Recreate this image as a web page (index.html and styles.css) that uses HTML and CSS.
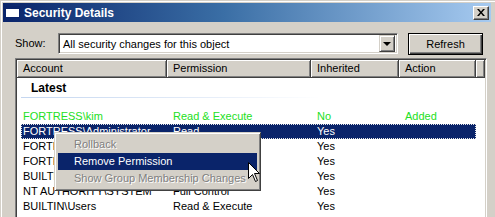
FILE: index.html
```html
<!DOCTYPE html>
<html>
<head>
<meta charset="utf-8">
<link rel="stylesheet" href="styles.css">
</head>
<body>
<div class="window">
  <div class="titlebar">
    <svg class="appicon" width="15" height="12" viewBox="0 0 15 12">
      <rect x="0.5" y="0.5" width="14" height="11" fill="#fff" stroke="#0a246a"/>
      <rect x="1" y="1" width="13" height="2" fill="#0a246a"/>
    </svg>
    <span class="title">Security Details</span>
    <span class="close">
      <svg width="8" height="7" viewBox="0 0 8 7"><path d="M0 0h2l2 2.5L6 0h2L5 3.5 8 7H6L4 4.5 2 7H0l3-3.5z" fill="#000"/></svg>
    </span>
  </div>
  <div class="content">
    <div class="showrow">
      <span class="showlabel">Show:</span>
      <div class="combo">
        <span class="combotext">All security changes for this object</span>
        <span class="dropbtn"><span class="arrow"></span></span>
      </div>
      <button class="btn">Refresh</button>
    </div>
    <div class="listview">
      <div class="header">
        <div class="hcell c1">Account</div>
        <div class="hcell c2">Permission</div>
        <div class="hcell c3">Inherited</div>
        <div class="hcell c4">Action</div>
        <div class="hcell c5"></div>
      </div>
      <div class="body">
        <div class="group">
          <div class="grouptitle">Latest</div>
          <div class="groupline"></div>
        </div>
        <div class="row added"><span>FORTRESS\kim</span><span>Read &amp; Execute</span><span>No</span><span>Added</span></div>
        <div class="row selected"><span>FORTRESS\Administrator</span><span>Read</span><span>Yes</span><span></span></div>
        <div class="row"><span>FORTRESS\Domain Admins</span><span></span><span>Yes</span><span></span></div>
        <div class="row"><span>FORTRESS\Enterprise Admins</span><span></span><span>Yes</span><span></span></div>
        <div class="row"><span>BUILTIN\Administrators</span><span></span><span>Yes</span><span></span></div>
        <div class="row"><span>NT AUTHORITY\SYSTEM</span><span>Full Control</span><span>Yes</span><span></span></div>
        <div class="row"><span>BUILTIN\Users</span><span>Read &amp; Execute</span><span>Yes</span><span></span></div>
      </div>
    </div>
  </div>
</div>
<div class="menu">
  <div class="item disabled">Rollback</div>
  <div class="item hot">Remove Permission</div>
  <div class="item disabled">Show Group Membership Changes</div>
</div>
<svg class="cursor" width="13" height="21" viewBox="0 0 13 21">
  <path d="M0.5 0.5V16.5L4.5 12.5L7.5 19.5L9.5 18.5L6.5 11.5H11.5Z" fill="#fff" stroke="#000" stroke-width="1" stroke-linejoin="miter"/>
</svg>
</body>
</html>
```
FILE: styles.css
```css
html, body {
  margin: 0;
  padding: 0;
}
body {
  width: 495px;
  height: 217px;
  overflow: hidden;
  background: #d4d0c8;
  font-family: "Liberation Sans", Arial, sans-serif;
  font-size: 11px;
  color: #000;
  position: relative;
}
.window {
  margin: 1px 0 0 1px;
  border-top: 1px solid #fff;
  border-left: 1px solid #fff;
  padding: 1px 0 0 1px;
  height: 220px;
}
.titlebar {
  width: 488px;
  height: 19px;
  display: flex;
  align-items: center;
  background: linear-gradient(90deg, #0a246a 0%, #3a6ea5 45%, #a6caf0 100%);
}
.appicon {
  margin-left: 2px;
  margin-top: -1px;
}
.title {
  margin-left: 4px;
  color: #fff;
  font-weight: bold;
  font-size: 12px;
  flex: 1;
}
.close {
  width: 16px;
  height: 14px;
  box-sizing: border-box;
  margin-right: 2px;
  background: #d4d0c8;
  border-top: 1px solid #fff;
  border-left: 1px solid #fff;
  border-right: 1px solid #404040;
  border-bottom: 1px solid #404040;
  box-shadow: inset -1px -1px #808080;
  display: flex;
  align-items: center;
  justify-content: center;
}
.content {
  padding: 11px 0 0 12px;
}
.showrow {
  display: flex;
  align-items: flex-start;
  height: 22px;
}
.showlabel {
  width: 43px;
  line-height: 21px;
}
.combo {
  width: 340px;
  height: 21px;
  box-sizing: border-box;
  background: #fff;
  border-top: 1px solid #808080;
  border-left: 1px solid #808080;
  border-right: 1px solid #fff;
  border-bottom: 1px solid #fff;
  box-shadow: inset 1px 1px #404040, inset -1px -1px #d4d0c8;
  display: flex;
  align-items: center;
  padding: 2px;
}
.combotext {
  flex: 1;
  padding-left: 2px;
}
.dropbtn {
  width: 16px;
  height: 17px;
  box-sizing: border-box;
  background: #d4d0c8;
  border-top: 1px solid #d4d0c8;
  border-left: 1px solid #d4d0c8;
  border-right: 1px solid #404040;
  border-bottom: 1px solid #404040;
  box-shadow: inset 1px 1px #fff, inset -1px -1px #808080;
  display: flex;
  align-items: center;
  justify-content: center;
}
.arrow {
  width: 0;
  height: 0;
  border-left: 4px solid transparent;
  border-right: 4px solid transparent;
  border-top: 4px solid #000;
  margin-top: 1px;
}
.btn {
  margin-left: 10px;
  width: 75px;
  height: 22px;
  box-sizing: border-box;
  font-family: inherit;
  font-size: 11px;
  background: #d4d0c8;
  border: 1px solid #000;
  box-shadow: inset 1px 1px #fff, inset -1px -1px #404040, inset -2px -2px #808080;
  padding: 0;
  color: #000;
}
.listview {
  margin-top: 3px;
  width: 472px;
  height: 170px;
  box-sizing: border-box;
  background: #fff;
  border-top: 1px solid #808080;
  border-left: 1px solid #808080;
  border-right: 1px solid #fff;
  border-bottom: 1px solid #fff;
  box-shadow: inset 1px 1px #404040, inset -1px -1px #d4d0c8;
  padding: 1px;
}
.header {
  display: grid;
  grid-template-columns: 150px 144px 88px 77px 9px;
  height: 18px;
}
.hcell {
  box-sizing: border-box;
  background: #d4d0c8;
  border-right: 1px solid #404040;
  border-bottom: 1px solid #404040;
  box-shadow: inset 1px 1px #fff, inset -1px -1px #808080;
  padding-left: 6px;
  line-height: 17px;
  white-space: nowrap;
  overflow: hidden;
}
.body {
  padding-left: 4px;
}
.group {
  height: 31px;
  padding-top: 4px;
  box-sizing: border-box;
}
.grouptitle {
  font-weight: bold;
  font-size: 12px;
  line-height: 13px;
  padding-left: 10px;
}
.groupline {
  margin-top: 2px;
  width: 300px;
  height: 1px;
  background: linear-gradient(90deg, #c4d6f0, #e4ecf8 60%, #fff);
}
.row {
  display: grid;
  grid-template-columns: 146px 144px 88px 77px;
  width: 455px;
  height: 15px;
  line-height: 15px;
  white-space: nowrap;
}
.row span {
  padding-left: 6px;
  overflow: hidden;
}
.row span:first-child {
  padding-left: 2px;
}
.row.added {
  color: #22e022;
}
.row.selected {
  background: #0a246a;
  color: #fff;
  outline: 1px dotted #e8e8e8;
  outline-offset: -1px;
}
.menu {
  position: absolute;
  left: 54px;
  top: 132px;
  width: 207px;
  box-sizing: border-box;
  background: #d4d0c8;
  border-top: 1px solid #d4d0c8;
  border-left: 1px solid #d4d0c8;
  border-right: 1px solid #404040;
  border-bottom: 1px solid #404040;
  box-shadow: inset 1px 1px #fff, inset -1px -1px #808080;
  padding: 3px;
}
.item {
  height: 17px;
  line-height: 17px;
  padding-left: 16px;
  white-space: nowrap;
}
.item.disabled {
  color: #808080;
  text-shadow: 1px 1px #fff;
}
.item.hot {
  background: #0a246a;
  color: #fff;
}
.cursor {
  position: absolute;
  left: 248px;
  top: 162px;
}
```
